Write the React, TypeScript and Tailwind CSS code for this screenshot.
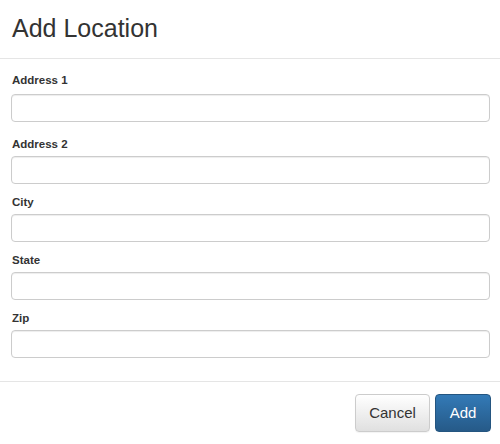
import React from "react";

const fields = ["Address 1", "Address 2", "City", "State", "Zip"];

export default function App() {
  return (
    <div className="w-[500px] h-[444px] bg-white text-[#333] font-['Liberation_Sans',Arial,sans-serif] flex flex-col">
      <div className="h-[59px] border-b border-[#e5e5e5] pl-[12px] pt-[15px]">
        <h4 className="text-[25px] leading-[27.5px] font-normal text-[#333]">Add Location</h4>
      </div>
      <div className="pl-[11px] pr-[10px] pt-[13px] flex flex-col">
        {fields.map((f, i) => (
          <div key={f} className={i === 0 ? "mb-[14px]" : i === 4 ? "" : "mb-[10px]"}>
            <label className={`block text-[11.5px] leading-[16px] font-bold pl-[1px] ${i === 0 ? "mb-[6px]" : "mb-[4px]"}`}>
              {f}
            </label>
            <input
              type="text"
              className="block w-full h-[28px] border border-[#ccc] rounded-[4px] bg-white shadow-[inset_0_1px_1px_rgba(0,0,0,0.075)] outline-none"
            />
          </div>
        ))}
      </div>
      <div className="mt-[23px] border-t border-[#e5e5e5] flex justify-end gap-[5px] pt-[12px] pr-[9px]">
        <button className="w-[75px] h-[38px] rounded-[4px] border border-[#ccc] bg-gradient-to-b from-white to-[#e0e0e0] text-[15px] text-[#333] shadow-[0_1px_1px_rgba(0,0,0,0.05)]">
          Cancel
        </button>
        <button className="w-[56px] h-[38px] rounded-[4px] border border-[#245580] bg-gradient-to-b from-[#337ab7] to-[#265a88] text-[15px] text-white">
          Add
        </button>
      </div>
    </div>
  );
}
